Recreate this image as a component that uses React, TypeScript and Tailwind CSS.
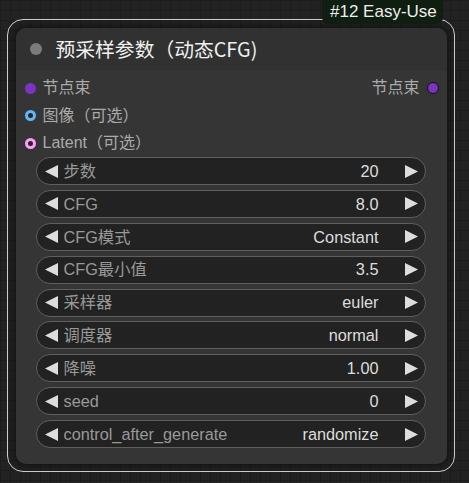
const inputs = [
  { label: "节点束", dot: "bg-[#7a34c2] border-[#7a34c2]" },
  { label: "图像（可选）", dot: "bg-[#262626] border-[#64b5f6]" },
  { label: "Latent（可选）", dot: "bg-[#262626] border-[#ff9cf9]" },
];

const widgets = [
  { name: "步数", value: "20" },
  { name: "CFG", value: "8.0" },
  { name: "CFG模式", value: "Constant" },
  { name: "CFG最小值", value: "3.5" },
  { name: "采样器", value: "euler" },
  { name: "调度器", value: "normal" },
  { name: "降噪", value: "1.00" },
  { name: "seed", value: "0" },
  { name: "control_after_generate", value: "randomize" },
];

const font = "font-['Liberation_Sans','Noto_Sans_CJK_SC',sans-serif]";

const Arrow = ({ dir }: { dir: "l" | "r" }) => (
  <svg width="13" height="13" viewBox="0 0 13 13" className="shrink-0">
    <polygon points={dir === "l" ? "13,0 13,13 0,6.5" : "0,0 0,13 13,6.5"} fill="#dddddd" />
  </svg>
);

const App = () => {
  return (
    <div
      className={`relative w-[469px] h-[483px] overflow-hidden bg-[#222222] bg-[linear-gradient(#1c1c1c_1px,transparent_1px),linear-gradient(90deg,#1c1c1c_1px,transparent_1px)] bg-size-[10px_10px] ${font}`}
    >
      {/* badge */}
      <div className="absolute left-[322px] top-0 z-10 h-[24px] w-[121px] rounded-b-[7px] bg-[#0f1e10] text-[17px] leading-[24px] text-[#eeeeee] pl-[8px]">
        #12 Easy-Use
      </div>

      {/* selection outline */}
      <div className="ml-[7px] mt-[19px] w-[448px] h-[453px] rounded-[16px] border-[1.5px] border-[#cfcfcf] p-[7.5px]">
        <div className="h-full rounded-[10px] bg-[#353535] shadow-[0_0_6px_2px_rgba(0,0,0,0.45)] flex flex-col">
          {/* title */}
          <div className="h-[42px] rounded-t-[10px] bg-[#313131] flex items-center pl-[14px] gap-[14px]">
            <div className="w-[12px] h-[12px] rounded-full bg-[#7b7b7b]" />
            <div className="text-[19.8px] text-[#f0f0f0] font-['Noto_Sans_CJK_SC','Liberation_Sans',sans-serif] leading-none mt-[1px]">
              预采样参数（动态CFG)
            </div>
          </div>

          {/* slots */}
          <div className="flex flex-col pt-[5px]">
            {inputs.map((s, i) => (
              <div key={s.label} className="h-[27.5px] flex items-center pl-[9px] pr-[8px]">
                <div className={`w-[11px] h-[11px] rounded-full border-[3px] ${s.dot}`} />
                <span className="ml-[7px] text-[16px] text-[#aaaaaa]">{s.label}</span>
                {i === 0 && (
                  <div className="ml-auto flex items-center">
                    <span className="text-[16px] text-[#aaaaaa]">节点束</span>
                    <div className="ml-[7px] w-[12px] h-[12px] rounded-full bg-[#7a34c2] border border-[#111]" />
                  </div>
                )}
              </div>
            ))}
          </div>

          {/* widgets */}
          <div className="flex flex-col gap-[4.9px] pl-[20px] pr-[21px]">
            {widgets.map((w) => (
              <div
                key={w.name}
                className="h-[28px] rounded-full border border-[#5f5f5f] bg-[#222222] flex items-center pl-[8px] pr-[7px] text-[16.3px]"
              >
                <Arrow dir="l" />
                <span className="ml-[6px] text-[#999999] truncate">{w.name}</span>
                <span className="ml-auto text-[#dddddd]">{w.value}</span>
                <span className="ml-[26px]">
                  <Arrow dir="r" />
                </span>
              </div>
            ))}
          </div>
        </div>
      </div>
    </div>
  );
};

export default App;
